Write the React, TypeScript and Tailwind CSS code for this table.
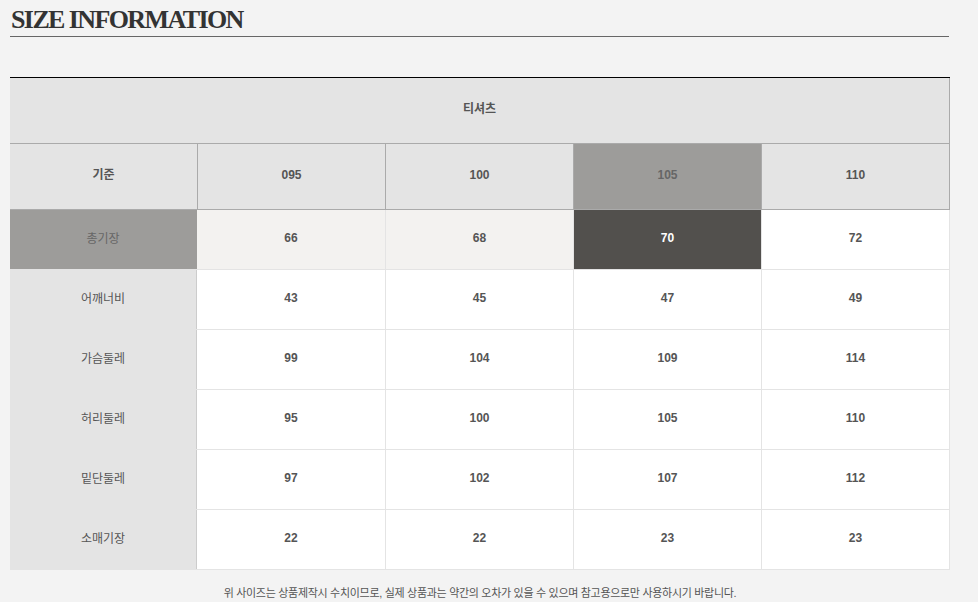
import React from 'react';

const sizes = ['095', '100', '105', '110'];

const rows: { label: string; values: number[] }[] = [
  { label: '총기장', values: [66, 68, 70, 72] },
  { label: '어깨너비', values: [43, 45, 47, 49] },
  { label: '가슴둘레', values: [99, 104, 109, 114] },
  { label: '허리둘레', values: [95, 100, 105, 110] },
  { label: '밑단둘레', values: [97, 102, 107, 112] },
  { label: '소매기장', values: [22, 22, 23, 23] },
];

const font = { fontFamily: '"Liberation Sans", "Noto Sans CJK KR", sans-serif' };

export default function App() {
  return (
    <div className="min-h-[602px] w-[978px] bg-[#f3f3f3] pl-[10px] pt-[4px] text-[12px] text-[#555]" style={font}>
      {/* Title */}
      <div className="w-[939px] border-b border-[#666] pb-[1px]">
        <h1 className="pl-[1px] font-['Liberation_Serif',serif] text-[26px] font-bold leading-[31px] tracking-[-1.6px] text-[#333]">
          SIZE INFORMATION
        </h1>
      </div>

      {/* Table */}
      <div className="mt-[40px] w-[940px] border-t border-black">
        <div className="flex h-[66px] items-center justify-center border-b border-r border-[#aaa] bg-[#e4e4e4] pb-[3px] font-bold text-[#555]">
          티셔츠
        </div>
        <div className="grid h-[66px] grid-cols-[187px_repeat(4,188px)] border-b border-r border-[#aaa] bg-[#e4e4e4]">
          <div className="flex items-center justify-center pb-[4px] font-bold text-[#555]">기준</div>
          {sizes.map((s, i) => (
            <div
              key={s}
              className={`flex items-center justify-center border-l border-[#aaa] pb-[4px] font-bold ${
                i === 2 ? 'bg-[#9d9c9a] text-[#666]' : 'text-[#555]'
              }`}
            >
              {s}
            </div>
          ))}
        </div>
        {rows.map((row, r) => (
          <div
            key={row.label}
            className="grid h-[60px] grid-cols-[187px_repeat(4,188px)] border-b border-r border-[#e4e4e4]"
          >
            <div
              className={`flex items-center justify-center border-r pb-[2px] ${
                r === 0 ? 'border-[#9d9c9a] bg-[#9d9c9a] text-[#666]' : 'border-[#ccc] bg-[#e4e4e4] text-[#555]'
              }`}
            >
              {row.label}
            </div>
            {row.values.map((v, i) => {
              let cls = 'bg-white text-[#555]';
              if (r === 0 && i < 2) cls = 'bg-[#f3f2f0] text-[#555]';
              if (r === 0 && i === 2) cls = 'bg-[#52504d] text-white';
              return (
                <div
                  key={i}
                  className={`flex items-center justify-center pb-[3px] font-bold ${i > 0 ? 'border-l border-[#e4e4e4]' : ''} ${cls}`}
                >
                  {v}
                </div>
              );
            })}
          </div>
        ))}
      </div>

      <p className="mt-[15px] w-[940px] text-center text-[11px] tracking-[-0.3px] text-[#555]">
        위 사이즈는 상품제작시 수치이므로, 실제 상품과는 약간의 오차가 있을 수 있으며 참고용으로만 사용하시기 바랍니다.
      </p>
    </div>
  );
}
